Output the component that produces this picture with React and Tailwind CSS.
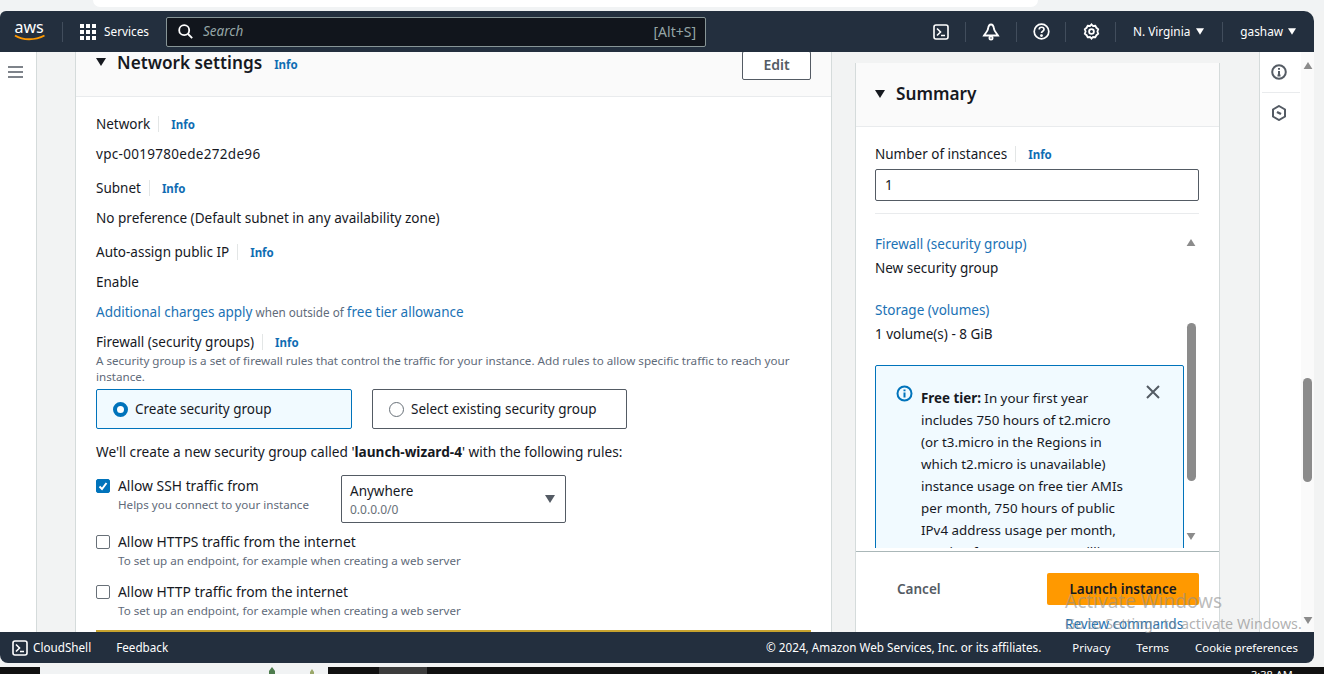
import React from "react";

const Info = ({ cls = "" }) => (
  <span className={`text-[11.5px] font-bold text-[#0f6db3] ${cls}`}>Info</span>
);
const LabelInfo = ({ children }) => (
  <div className="flex items-center h-[20px] text-[13.5px] text-[#16191f]">
    <span>{children}</span>
    <span className="w-px h-[16px] bg-[#e3e6e6] ml-[8px] mr-[12px]" />
    <Info cls="mt-[1px]" />
  </div>
);
const Caret = ({ cls = "" }) => (
  <svg width="10" height="8" viewBox="0 0 10 8" className={cls}>
    <path d="M0 0h10L5 8z" fill="currentColor" />
  </svg>
);
const Check = ({ on, title, sub }) => (
  <div className="flex gap-[8px]">
    <span className={`w-[14px] h-[14px] mt-[3px] rounded-[2px] border flex items-center justify-center ${on ? "bg-[#0073bb] border-[#0073bb]" : "border-[#687078] bg-white"}`}>
      {on && (
        <svg width="10" height="10" viewBox="0 0 10 10"><path d="M1.5 5.5 4 8l4.5-6" fill="none" stroke="#fff" strokeWidth="2" /></svg>
      )}
    </span>
    <div>
      <div className="text-[13.85px] leading-[20px] text-[#16191f]">{title}</div>
      <div className="text-[11.6px] leading-[18px] text-[#5f6b7a]">{sub}</div>
    </div>
  </div>
);

export default function App() {
  return (
    <div className="relative w-[1324px] h-[674px] overflow-hidden bg-[#f2f3f3] flex flex-col" style={{ fontFamily: '"Noto Sans", sans-serif' }}>
      <div className="h-[11px] shrink-0 bg-[#f1f3f4] pl-[93px]">
        <div className="w-[945px] h-[7px] bg-white rounded-b-[8px]" />
      </div>
      <header className="h-[41px] shrink-0 w-[1314px] bg-[#232f3e] rounded-tr-[10px] rounded-tl-[6px] flex items-center text-white text-[11.8px] pl-[14px]">
        <svg width="33" height="24" viewBox="0 0 33 24" className="shrink-0 overflow-visible">
          <text x="0.500" y="13" fontSize="16" fill="#fff" fontFamily="Noto Sans">aws</text>
          <path d="M1 15.500c8 5 20 5 29.500 0" fill="none" stroke="#f90" strokeWidth="1.800" />
        </svg>
        <span className="w-px h-[20px] bg-[#414d5c] ml-[15px] mr-[17px]" />
        <svg width="16" height="16" viewBox="0 0 16 16" fill="#fff" className="shrink-0">
          {[0, 6, 12].flatMap((x) => [0, 6, 12].map((y) => <rect key={`${x}-${y}`} x={x} y={y} width="4" height="4" />))}
        </svg>
        <span className="ml-[8px] w-[54px]">Services</span>
        <div className="ml-[8px] w-[540px] h-[30px] bg-[#11151c] border border-[#879596] rounded-[2px] flex items-center pl-[11px] pr-[9px] shrink-0">
          <svg width="15" height="15" viewBox="0 0 15 15" fill="none" stroke="#fff" strokeWidth="1.800"><circle cx="6.200" cy="6.200" r="5" /><path d="m10 10 4.200 4.200" /></svg>
          <span className="ml-[10px] italic text-[13.500px] text-[#95a5a6]">Search</span>
          <span className="ml-auto text-[14px] text-[#95a5a6]">[Alt+S]</span>
        </div>
        <div className="flex items-center ml-[227px]">
          <svg width="16" height="16" viewBox="0 0 16 16" fill="none" stroke="#fff" strokeWidth="1.600"><rect x="1" y="1" width="14" height="14" rx="2" /><path d="m4 4.500 3.500 3.500L4 11.500M8 11.500h4" /></svg>
          <span className="w-px h-[20px] bg-[#414d5c] ml-[16px] mr-[16px]" />
          <svg width="18" height="18" viewBox="0 0 18 18" fill="none" stroke="#fff" strokeWidth="1.800"><path d="M9 1.500C7 1.500 6.300 3.500 6 6 5.700 8 3.500 10 2 12.500h14C14.500 10 12.300 8 12 6 11.700 3.500 11 1.500 9 1.500Z" /><circle cx="9" cy="15" r="1.600" /></svg>
          <span className="w-px h-[20px] bg-[#414d5c] ml-[16px] mr-[16px]" />
          <svg width="17" height="17" viewBox="0 0 17 17" fill="none" stroke="#fff" strokeWidth="1.700"><circle cx="8.500" cy="8.500" r="7.300" /><path d="M6.200 6.500c0-3 4.800-3 4.800 0 0 1.800-2.500 1.700-2.500 3.500" /><circle cx="8.500" cy="12.600" r=".6" fill="#fff" /></svg>
          <span className="w-px h-[20px] bg-[#414d5c] ml-[15px] mr-[17px]" />
          <svg width="17" height="17" viewBox="0 0 17 17" fill="none" stroke="#fff" strokeWidth="1.800"><circle cx="8.500" cy="8.500" r="2.400" /><path d="M8.500 1.400 10 3l2.300-.2 1.100 2 1.800 1.500-.8 2.200.8 2.200-1.800 1.500-1.100 2L10 14l-1.500 1.600L7 14l-2.300.2-1.100-2-1.800-1.500.8-2.200-.8-2.200 1.800-1.500 1.100-2L7 3z" /></svg>
          <span className="w-px h-[20px] bg-[#414d5c] ml-[15px] mr-[17px]" />
          <span className="whitespace-nowrap">N. Virginia</span>
          <Caret cls="ml-[6px] w-[8px] h-[7px] text-white" />
          <span className="w-px h-[20px] bg-[#414d5c] ml-[18px] mr-[17px]" />
          <span>gashaw</span>
          <Caret cls="ml-[5px] w-[8px] h-[7px] text-white" />
        </div>
      </header>

      <main className="h-[580px] shrink-0 flex overflow-hidden w-[1314px]">
        <aside className="w-[37px] shrink-0 bg-white border-r border-[#d5dbdb] flex justify-center pt-[14px] pr-[5px]">
          <svg width="15" height="12" viewBox="0 0 15 12" stroke="#545b64" strokeWidth="1.600"><path d="M0 1h15M0 6h15M0 11h15" /></svg>
        </aside>
        <div className="w-[38px] shrink-0" />
        <section className="w-[757px] shrink-0 bg-white border-l border-r border-[#d5dbdb] overflow-hidden">
          <div className="h-[45px] bg-[#fafafa] border-b border-[#e9ebed] flex items-start pl-[20px] pr-[20px]">
            <Caret cls="mt-[6px] text-[#16191f]" />
            <span className="ml-[11px] text-[17.200px] leading-[22px] font-semibold text-[#16191f]">Network settings</span>
            <Info cls="ml-[12px] mt-[4px]" />
            <span className="ml-auto w-[69px] h-[29px] -mt-[1px] pb-[2px] bg-white border border-[#545b64] rounded-[2px] flex items-center justify-center text-[14px] font-semibold text-[#545b64]">Edit</span>
          </div>
          <div className="pl-[20px] pr-[20px] pt-[17px]">
            <LabelInfo>Network</LabelInfo>
            <div className="mt-[10px] h-[20px] text-[13.500px] tracking-[0.3px] leading-[20px] text-[#16191f]">vpc-0019780ede272de96</div>
            <div className="mt-[14px]"><LabelInfo>Subnet</LabelInfo></div>
            <div className="mt-[10px] h-[20px] text-[13.550px] leading-[20px] text-[#16191f]">No preference (Default subnet in any availability zone)</div>
            <div className="mt-[14px]"><LabelInfo>Auto-assign public IP</LabelInfo></div>
            <div className="mt-[10px] h-[20px] text-[13.500px] leading-[20px] text-[#16191f]">Enable</div>
            <div className="mt-[10px] h-[20px] leading-[20px] text-[11.700px] text-[#5f6b7a] whitespace-nowrap">
              <span className="text-[13.500px] text-[#1b72b5]">Additional charges apply</span> when outside of <span className="text-[13.500px] text-[#1b72b5]">free tier allowance</span>
            </div>
            <div className="mt-[10px]"><LabelInfo>Firewall (security groups)</LabelInfo></div>
            <div className="mt-[1px] text-[11.650px] leading-[16px] text-[#5f6b7a] w-[715px]">A security group is a set of firewall rules that control the traffic for your instance. Add rules to allow specific traffic to reach your instance.</div>
            <div className="flex gap-[20px] mt-[4px]">
              <div className="w-[256px] h-[40px] rounded-[2px] border border-[#0073bb] bg-[#f1faff] flex items-center pl-[16px]">
                <span className="w-[15px] h-[15px] rounded-full border-[4px] border-[#0073bb] bg-white" />
                <span className="ml-[7px] text-[13.500px] text-[#16191f]">Create security group</span>
              </div>
              <div className="w-[255px] h-[40px] rounded-[2px] border border-[#545b64] flex items-center pl-[16px]">
                <span className="w-[15px] h-[15px] rounded-full border border-[#687078] bg-white" />
                <span className="ml-[7px] text-[13.500px] text-[#16191f]">Select existing security group</span>
              </div>
            </div>
            <div className="mt-[13px] h-[20px] leading-[20px] text-[13.650px] text-[#16191f]">We'll create a new security group called '<b className="font-bold">launch-wizard-4</b>' with the following rules:</div>
            <div className="mt-[13px] flex h-[50px]">
              <div className="w-[245px] pt-[1px]"><Check on title="Allow SSH traffic from" sub="Helps you connect to your instance" /></div>
              <div className="w-[225px] h-[48px] border border-[#545b64] rounded-[2px] flex items-center pl-[8px] pr-[9px]">
                <div className="flex-1 pt-[2px]">
                  <div className="text-[13.500px] leading-[18px] text-[#16191f]">Anywhere</div>
                  <div className="mt-[1px] text-[12px] leading-[18px] text-[#687078]">0.0.0.0/0</div>
                </div>
                <Caret cls="w-[12px] text-[#545b64]" />
              </div>
            </div>
            <div className="mt-[7px]"><Check title="Allow HTTPS traffic from the internet" sub="To set up an endpoint, for example when creating a web server" /></div>
            <div className="mt-[12px]"><Check title="Allow HTTP traffic from the internet" sub="To set up an endpoint, for example when creating a web server" /></div>
            <div className="mt-[10px] h-[20px] border-t-2 border-[#c7a32e] bg-white" />
          </div>
        </section>
        <div className="w-[23px] shrink-0" />
        <section className="w-[365px] shrink-0 flex flex-col bg-white border-l border-r border-[#d5dbdb] mt-[11px] h-[569px] relative">
          <div className="h-[64px] shrink-0 bg-[#fafafa] border-b border-[#e9ebed] flex items-center pl-[19px] pb-[2px]">
            <Caret cls="text-[#16191f]" />
            <span className="ml-[11px] text-[17.200px] font-semibold text-[#16191f]">Summary</span>
          </div>
          <div className="pl-[19px] pr-[20px] pt-[17px]">
            <LabelInfo>Number of instances</LabelInfo>
            <div className="mt-[5px] h-[32px] border border-[#545b64] rounded-[2px] pl-[9px] flex items-center text-[13.500px] text-[#16191f]">1</div>
            <div className="mt-[12px] h-px bg-[#e9ebed]" />
          </div>
          <div className="h-[337px] shrink-0 flex overflow-hidden pl-[19px] pb-[3px]">
            <div className="w-[309px] pt-[20px] shrink-0 overflow-hidden">
              <div className="text-[13.500px] leading-[20px] text-[#1b72b5]">Firewall (security group)</div>
              <div className="mt-[4px] text-[13.500px] leading-[20px] text-[#16191f]">New security group</div>
              <div className="mt-[22px] text-[13.500px] leading-[20px] text-[#1b72b5]">Storage (volumes)</div>
              <div className="mt-[4px] text-[13.500px] leading-[20px] text-[#16191f]">1 volume(s) - 8 GiB</div>
              <div className="mt-[21px] border border-[#0073bb] rounded-[2px] bg-[#f1faff] flex pl-[20px] pr-[21px] pt-[21px] pb-[20px]">
                <svg width="17" height="17" viewBox="0 0 17 17" fill="none" stroke="#0073bb" strokeWidth="2" className="shrink-0 -mt-[2px]"><circle cx="8.500" cy="8.500" r="7" /><path d="M8.500 7.500v5M8.500 4.500v1.800" /></svg>
                <div className="ml-[8px] w-[216px] shrink-0 text-[13.350px] leading-[22px] text-[#16191f]"><b className="font-bold">Free tier:</b> In your first year<br />includes 750 hours of t2.micro<br />(or t3.micro in the Regions in<br />which t2.micro is unavailable)<br />instance usage on free tier AMIs<br />per month, 750 hours of public<br />IPv4 address usage per month,<br />30 GiB of EBS storage, 2 million</div>
                <svg width="14" height="14" viewBox="0 0 14 14" stroke="#545b64" strokeWidth="2" className="shrink-0 ml-[9px] -mt-[2px]"><path d="m1 1 12 12M13 1 1 13" /></svg>
              </div>
            </div>
            <div className="w-[14px] flex flex-col items-center relative">
              <Caret cls="mt-[25px] rotate-180 h-[7px] text-[#8b8b8b]" />
              <span className="w-[9px] h-[158px] mt-[77px] rounded-full bg-[#8b8b8b]" />
              <Caret cls="absolute bottom-[8px] h-[7px] text-[#8b8b8b]" />
            </div>
          </div>
          <div className="border-t border-[#aab7b8] flex items-center h-[69px] pl-[41px] pr-[20px] pt-[6px]">
            <span className="text-[13.500px] font-semibold text-[#545b64]">Cancel</span>
            <span className="ml-auto w-[152px] h-[32px] rounded-[2px] bg-[#ff9900] flex items-center justify-center text-[13.500px] font-semibold text-[#16191f]">Launch instance</span>
          </div>
          <span className="absolute left-[209px] bottom-0 text-[13.500px] leading-[16px] text-[#1b72b5]">Review commands</span>
        </section>
        <div className="w-[39px] shrink-0" />
        <aside className="w-[42px] shrink-0 bg-white border-l border-[#d5dbdb] flex flex-col items-center pt-[12px]">
          <svg width="16" height="16" viewBox="0 0 16 16" fill="none" stroke="#545b64" strokeWidth="2" className="mr-[3px]"><circle cx="8" cy="8" r="6.800" /><path d="M8 7v4.500M6.500 11.500h3M8 4v1.700" /></svg>
          <span className="w-[38px] h-px bg-[#e9ebed] mt-[12px] mb-[12px]" />
          <svg width="16" height="16" viewBox="0 0 16 16" fill="none" stroke="#545b64" strokeWidth="2" className="mr-[3px]"><path d="M8 1 14 4.500v7L8 15l-6-3.500v-7z" /><path d="M6 7l4 2" strokeWidth="2.500" /></svg>
        </aside>
        <div className="w-[13px] shrink-0 bg-[#fafafa] flex flex-col items-center relative">
          <Caret cls="mt-[10px] rotate-180 h-[7px] text-[#8b8b8b]" />
          <span className="w-[9px] h-[104px] mt-[309px] rounded-full bg-[#8b8b8b]" />
          <Caret cls="absolute bottom-[8px] h-[7px] text-[#8b8b8b]" />
        </div>
      </main>

      <footer className="h-[31px] shrink-0 w-[1314px] bg-[#232f3e] rounded-b-[8px] flex items-center text-white text-[11.700px] pl-[12px] pr-[16px]">
        <svg width="16" height="16" viewBox="0 0 16 16" fill="none" stroke="#fff" strokeWidth="1.600"><rect x="1" y="1" width="14" height="14" rx="2" /><path d="m4 4.500 3.500 3.500L4 11.500M8 11.500h4" /></svg>
        <span className="ml-[5px]">CloudShell</span>
        <span className="ml-[25px]">Feedback</span>
        <span className="ml-auto">© 2024, Amazon Web Services, Inc. or its affiliates.</span>
        <span className="ml-[31px] text-[11.400px]">Privacy</span>
        <span className="ml-[26px] text-[11.400px]">Terms</span>
        <span className="ml-[26px] text-[11.400px]">Cookie preferences</span>
      </footer>
      <div className="h-[4px] shrink-0" />
      <div className="h-[7px] shrink-0 bg-[#111] flex overflow-hidden">
        <div className="w-[40px]" />
        <div className="w-[288px] bg-[#f1f3f4] pl-[229px]">
          <svg width="50" height="7" viewBox="0 0 50 7"><path d="M3 0l3 4v3H0V4z" fill="#4d7c4d" /><path d="M41 5l2-3 2 3v2h-4z" fill="#9aa86a" /></svg>
        </div>
        <div className="w-[51px]" />
        <div className="w-[48px] bg-[#3d3d3d]" />
        <span className="ml-[824px] pt-[1px] text-[11px] leading-[14px] text-white whitespace-nowrap">3:38 AM</span>
      </div>

      <div className="absolute left-[1065px] top-[590px] text-[19px] leading-[22px] text-[#8f8f8f]/60 whitespace-nowrap pointer-events-none">Activate Windows</div>
      <div className="absolute left-[1065px] top-[615px] text-[14.300px] leading-[18px] text-[#8f8f8f]/70 whitespace-nowrap pointer-events-none">Go to Settings to activate Windows.</div>
    </div>
  );
}
